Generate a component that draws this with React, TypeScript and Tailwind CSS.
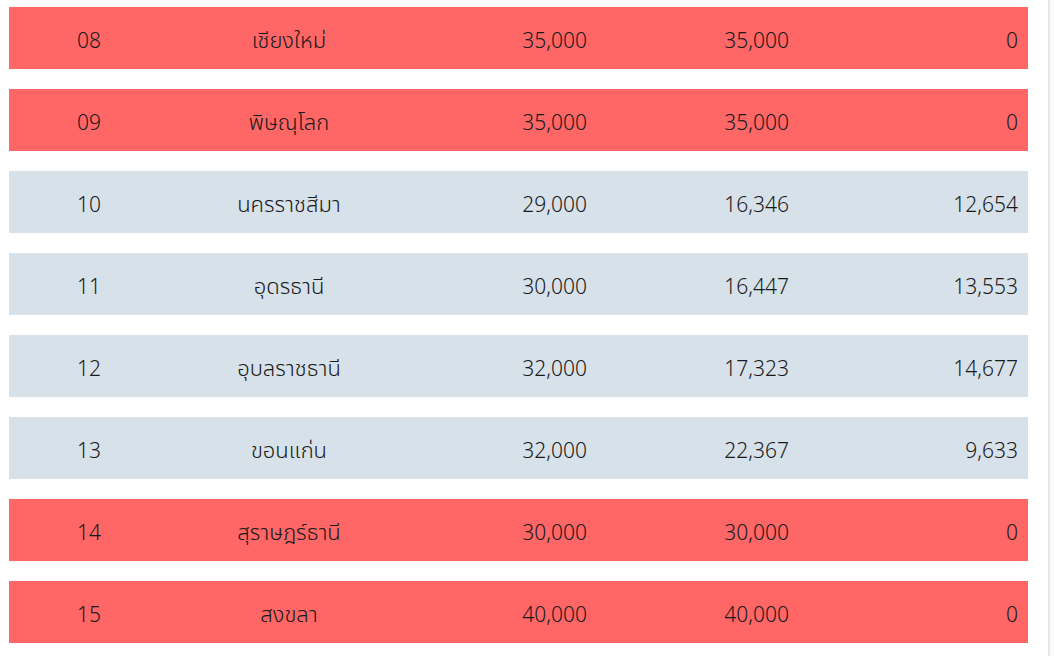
import React from "react";

type Row = { code: string; name: string; a: string; b: string; c: string; red: boolean };

const rows: Row[] = [
  { code: "08", name: "เชียงใหม่", a: "35,000", b: "35,000", c: "0", red: true },
  { code: "09", name: "พิษณุโลก", a: "35,000", b: "35,000", c: "0", red: true },
  { code: "10", name: "นครราชสีมา", a: "29,000", b: "16,346", c: "12,654", red: false },
  { code: "11", name: "อุดรธานี", a: "30,000", b: "16,447", c: "13,553", red: false },
  { code: "12", name: "อุบลราชธานี", a: "32,000", b: "17,323", c: "14,677", red: false },
  { code: "13", name: "ขอนแก่น", a: "32,000", b: "22,367", c: "9,633", red: false },
  { code: "14", name: "สุราษฎร์ธานี", a: "30,000", b: "30,000", c: "0", red: true },
  { code: "15", name: "สงขลา", a: "40,000", b: "40,000", c: "0", red: true },
];

export default function App() {
  return (
    <div
      className="flex h-[656px] w-[1054px] overflow-hidden bg-white text-[#1a1a1a]"
      style={{ fontFamily: '"Noto Sans", "Noto Sans Thai", "Open Sans", sans-serif' }}
    >
      <div className="flex w-[1048px] flex-col gap-5 pl-[9px] pr-[20px] pt-[7px]">
        {rows.map((r) => (
          <div
            key={r.code}
            className={`grid h-[62px] grid-cols-[160px_240px_188px_202px_229px] items-baseline pt-[17px] text-[21px] font-light leading-[30px] ${
              r.red ? "bg-[#ff6666]" : "bg-[#d7e1ea]"
            }`}
          >
            <div className="text-center">{r.code}</div>
            <div className="text-center text-[22px]">{r.name}</div>
            <div className="pr-[10px] text-right">{r.a}</div>
            <div className="pr-[10px] text-right">{r.b}</div>
            <div className="pr-[10px] text-right">{r.c}</div>
          </div>
        ))}
      </div>
      <div className="h-full w-[6px] border-l-2 border-[#e6e6e6] bg-[#fafafa]" />
    </div>
  );
}
